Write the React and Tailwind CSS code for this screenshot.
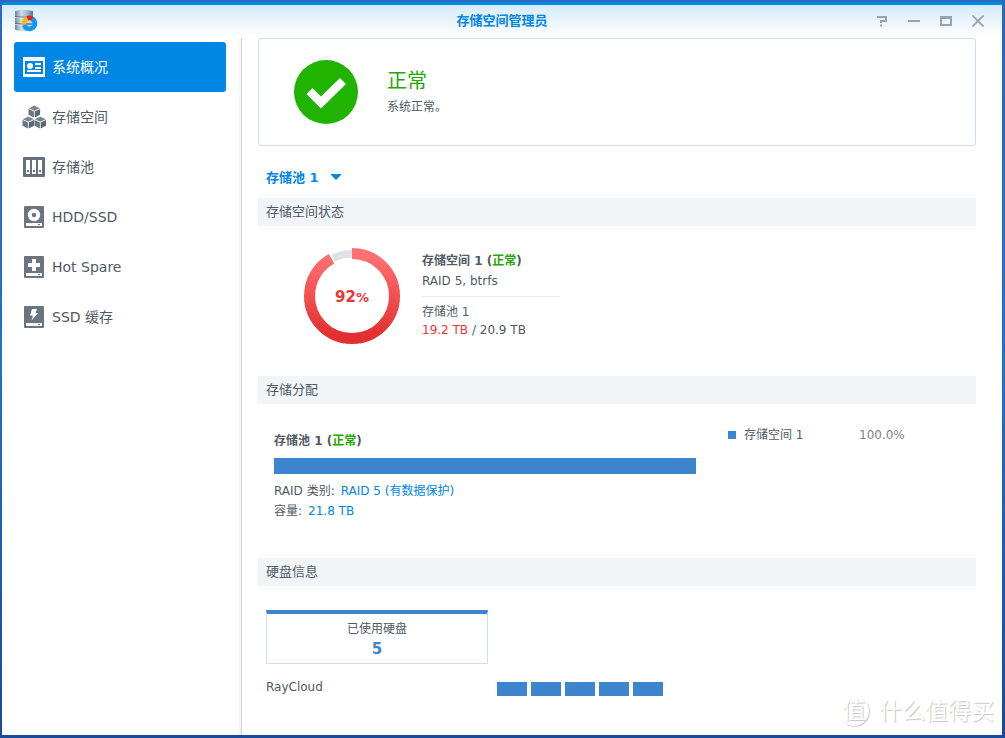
import { useState } from "react";

const menu = [
  { id: "overview", label: "系统概况", Icon: OverviewIcon },
  { id: "volume", label: "存储空间", Icon: VolumeIcon },
  { id: "pool", label: "存储池", Icon: PoolIcon },
  { id: "hdd", label: "HDD/SSD", Icon: HddIcon },
  { id: "spare", label: "Hot Spare", Icon: SpareIcon },
  { id: "cache", label: "SSD 缓存", Icon: CacheIcon },
];

const disks = [1, 2, 3, 4, 5];

function AppIcon() {
  return (
    <svg width="24" height="24" viewBox="0 0 24 24" aria-hidden="true">
      <defs>
        <linearGradient id="cylinder" x1="0" y1="0" x2="1" y2="0">
          <stop offset="0" stopColor="#6b899d" />
          <stop offset="0.35" stopColor="#cfdfe9" />
          <stop offset="0.7" stopColor="#9db4c4" />
          <stop offset="1" stopColor="#58768a" />
        </linearGradient>
      </defs>
      <path d="M1 2Q10 0 19 2V21Q10 23 1 21Z" fill="url(#cylinder)" />
      <path d="M1 7.500Q10 9 19 7.500M1 14.500Q10 16 19 14.500" fill="none" stroke="#587085" strokeWidth="1" />
      <path d="M1 8.500Q10 10 19 8.500M1 15.500Q10 17 19 15.500" fill="none" stroke="#eaf2f7" strokeWidth="0.6" />
      <circle cx="15.500" cy="14.500" r="3" fill="#c3d3de" />
      <path d="M12.500 15H18.500" stroke="#4b6172" strokeWidth="1.200" />
      <g fill="none" strokeWidth="4.500">
        <path d="M18.300 9.700A5.500 5.500 0 1 1 10.200 16" stroke="#0a9bff" />
        <path d="M9.800 15.500A5.500 5.500 0 0 1 13.500 9.500" stroke="#fdb913" />
        <path d="M13.300 9.300A5.500 5.500 0 0 1 18.300 9.600" stroke="#e3202b" />
      </g>
    </svg>
  );
}

function OverviewIcon() {
  return (
    <svg width="24" height="24" viewBox="0 0 24 24" aria-hidden="true">
      <path d="M1 2H23V22H1ZM3 6V19H21V6Z" fill="#fff" fillRule="evenodd" />
      <circle cx="8" cy="11" r="3" fill="#fff" />
      <path d="M13 8H19V10H13ZM13 12H19V14H13ZM5 15H19V17H5Z" fill="#fff" />
    </svg>
  );
}

function Cube({ x, y }) {
  return (
    <g transform={`translate(${x} ${y})`}>
      <path d="M5.800 0L11.300 2.700L5.800 5.300L0.300 2.700Z" fill="#7d868f" />
      <path d="M0 3.400L5.400 6V12L0 9.300Z" fill="#6b7480" />
      <path d="M11.600 3.400L6.200 6V12L11.600 9.300Z" fill="#5d6773" />
    </g>
  );
}

function VolumeIcon() {
  return (
    <svg width="24" height="24" viewBox="0 0 24 24" aria-hidden="true">
      <Cube x={6.5} y={0.5} />
      <Cube x={0.5} y={11.5} />
      <Cube x={12.5} y={11.5} />
    </svg>
  );
}

function PoolIcon() {
  return (
    <svg width="24" height="24" viewBox="0 0 24 24" aria-hidden="true">
      <rect x="1" y="2" width="22" height="20" rx="1" fill="#67717d" />
      <path d="M4 5H8V19H4ZM10 5H14V19H10ZM16 5H20V19H16Z" fill="#fff" />
      <path d="M5 15H7V17H5ZM11 15H13V17H11ZM17 15H19V17H17Z" fill="#67717d" />
    </svg>
  );
}

function DriveIcon({ children }) {
  return (
    <svg width="24" height="24" viewBox="0 0 24 24" aria-hidden="true">
      <rect x="2" y="1" width="20" height="22" rx="1" fill="#6b7580" />
      <path d="M4 18H20V21H4ZM16 19V20H18V19Z" fill="#fff" fillRule="evenodd" />
      {children}
    </svg>
  );
}

function HddIcon() {
  return (
    <DriveIcon>
      <circle cx="12" cy="10" r="4.200" fill="none" stroke="#fff" strokeWidth="4" />
    </DriveIcon>
  );
}

function SpareIcon() {
  return (
    <DriveIcon>
      <path d="M10 4H14V8H18V12H14V16H10V12H6V8H10Z" fill="#fff" />
    </DriveIcon>
  );
}

function CacheIcon() {
  return (
    <DriveIcon>
      <path d="M10 4H15L13.500 8H16L9.500 15.500L11 10.500H8Z" fill="#fff" />
    </DriveIcon>
  );
}

function WindowButton({ label, children }) {
  return (
    <button type="button" aria-label={label} className="flex h-8 w-8 items-center justify-center">
      <svg width="12" height="12" viewBox="0 0 12 12" fill="none" stroke="#98a3ad" strokeWidth="2">
        {children}
      </svg>
    </button>
  );
}

function TitleBar() {
  return (
    <header className="grid h-[33px] grid-cols-[1fr_auto_1fr] items-start bg-linear-to-b from-[#d6eaf9] to-white px-2">
      <div className="pt-1 pl-1">
        <AppIcon />
      </div>
      <h1 className="text-[13px] leading-8 font-bold text-[#0086e5]">存储空间管理员</h1>
      <div className="flex justify-end">
        <WindowButton label="帮助">
          <path d="M1 2H10V6H5V8M4 10.500H6" />
        </WindowButton>
        <WindowButton label="最小化">
          <path d="M0 6H12" />
        </WindowButton>
        <WindowButton label="最大化">
          <path d="M0 2.500H12" strokeWidth="3" />
          <path d="M1 3V10H11V3" />
        </WindowButton>
        <WindowButton label="关闭">
          <path d="M0.500 0.500L11.500 11.500M11.500 0.500L0.500 11.500" strokeWidth="1.800" />
        </WindowButton>
      </div>
    </header>
  );
}

function Sidebar({ active, onSelect }) {
  return (
    <nav className="w-60 shrink-0 border-r border-[#d5d5d5] bg-linear-to-l from-[#f0f0f0] to-white to-[3px] pt-1 pr-[15px] pl-3">
      {menu.map(({ id, label, Icon }) => (
        <button
          key={id}
          type="button"
          onClick={() => onSelect(id)}
          className={`flex h-[50px] w-full items-center gap-1.5 rounded-[3px] px-2 text-[14px] ${
            active === id ? "bg-[#0086e5] text-white" : "text-[#505a64]"
          }`}
        >
          <Icon />
          {label}
        </button>
      ))}
    </nav>
  );
}

function SectionTitle({ children }) {
  return (
    <h2 className="h-7 bg-[#f1f5f8] px-2 text-[13px] leading-7 text-[#505a64]">{children}</h2>
  );
}

function UsageRing({ percent }) {
  return (
    <div className="relative h-24 w-24">
      <svg width="96" height="96" viewBox="0 0 96 96" aria-hidden="true">
        <defs>
          <linearGradient id="usage" gradientUnits="userSpaceOnUse" x1="0" y1="0" x2="0" y2="96">
            <stop offset="0.1" stopColor="#ff7070" />
            <stop offset="0.9" stopColor="#e33030" />
          </linearGradient>
          {/* the ring is turned a quarter, so its gradient is turned back */}
          <linearGradient id="usage-side" href="#usage" gradientTransform="rotate(90 48 48)" />
        </defs>
        <g fill="none" transform="rotate(-90 48 48)">
          <circle cx="48" cy="48" r="42.300" stroke="#dde2e6" strokeWidth="7.400" />
          <circle cx="48" cy="48" r="42.500" stroke="#fff" strokeWidth="11" pathLength="100" strokeDasharray={`${percent + 0.6} 100`} />
          <circle cx="48" cy="48" r="42.500" stroke="url(#usage-side)" strokeWidth="11" pathLength="100" strokeDasharray={`${percent} 100`} />
        </g>
      </svg>
      <div className="absolute inset-0 flex items-center justify-center pt-0.5 text-[15px] font-bold text-[#ee3535]">
        <p>
          {percent}
          <span className="text-[13px]">%</span>
        </p>
      </div>
    </div>
  );
}

function Watermark() {
  return (
    <div className="absolute right-2 bottom-2 flex items-center gap-2.5 text-[23px] leading-8 text-white [text-shadow:1px_1px_1px_#c4c4c4]">
      <span className="h-[30px] w-[30px] rounded-full text-center leading-[28px] shadow-[1px_1px_1px_#ccc]">值</span>
      <span>什么值得买</span>
    </div>
  );
}

export default function App() {
  const [active, setActive] = useState("overview");

  return (
    <div className="flex min-h-screen bg-linear-to-b from-[#2a69bd] via-[#1f72c4] to-[#1a4a9c] pt-0.5 pr-[3px] pb-[3px] pl-0.5 font-['DejaVu_Sans','Noto_Sans_CJK_SC',sans-serif] text-[12px] leading-5 text-[#505a64]">
      <div className="relative flex flex-1 flex-col border-t-[3px] border-[#0086e5] bg-white">
        <TitleBar />
        <div className="flex flex-1">
          <Sidebar active={active} onSelect={setActive} />

          <main className="flex-1 pr-[26px] pl-4">
            {/* Health */}
            <section className="flex h-[108px] items-center gap-[29px] rounded-[3px] border border-[#d2dde6] pl-[35px]">
              <svg width="64" height="64" viewBox="0 0 64 64" aria-hidden="true">
                <circle cx="32" cy="32" r="32" fill="#20b400" />
                <path d="M12.500 34L18.500 28L27 36.500L46 18L52 24L27 48.500Z" fill="#fff" />
              </svg>
              <div className="pb-0.5">
                <h2 className="text-[20px] leading-8 text-[#1fa800]">正常</h2>
                <p>系统正常。</p>
              </div>
            </section>

            {/* Pool picker */}
            <div className="flex h-[52px] items-center px-2 pt-3">
              <div className="relative">
                <select
                  aria-label="存储池"
                  className="w-20 appearance-none text-[13px] leading-5 font-bold text-[#0086e5]"
                >
                  <option>存储池 1</option>
                </select>
                <svg width="10" height="6" viewBox="0 0 10 6" className="pointer-events-none absolute top-1.5 right-[5px]" aria-hidden="true">
                  <path d="M0 0H10V1L5 6L0 1Z" fill="#0086e5" />
                </svg>
              </div>
            </div>

            <SectionTitle>存储空间状态</SectionTitle>
            <div className="flex h-[150px] gap-[22px] pt-[22px] pl-[46px]">
              <UsageRing percent={92} />
              <div className="pt-[3px]">
                <h3 className="font-bold">
                  存储空间 1 (<span className="text-[#1fa800]">正常</span>)
                </h3>
                <p className="w-[138px] border-b border-[#e8ebee] pb-[5px]">RAID 5, btrfs</p>
                <p className="pt-1.5 leading-[18px]">存储池 1</p>
                <p className="leading-[18px]">
                  <span className="text-[#ee3535]">19.2 TB</span> / 20.9 TB
                </p>
              </div>
            </div>

            <SectionTitle>存储分配</SectionTitle>
            <div className="flex h-[154px] gap-8 pl-4">
              <div className="flex-1 pt-[27px]">
                <h3 className="font-bold">
                  存储池 1 (<span className="text-[#1fa800]">正常</span>)
                </h3>
                <div className="my-[7px] h-4 bg-[#3d85cd]" />
                <p className="flex gap-1.5">
                  RAID 类别: <span className="text-[#0086e5]">RAID 5 (有数据保护)</span>
                </p>
                <p className="flex gap-1.5">
                  容量: <span className="text-[#0086e5]">21.8 TB</span>
                </p>
              </div>
              <div className="flex w-[248px] items-start pt-[21px]">
                <p className="flex w-[131px] items-center gap-2">
                  <span className="h-2 w-2 bg-[#3d85cd]" />
                  存储空间 1
                </p>
                <p className="text-[#7b838c]">100.0%</p>
              </div>
            </div>

            <SectionTitle>硬盘信息</SectionTitle>
            <div className="px-2 pt-6">
              <div className="w-[222px] border border-t-4 border-[#d2dde6] border-t-[#3d85cd] pt-[5px] pb-1 text-center">
                <p>已使用硬盘</p>
                <p className="text-[15px] font-bold text-[#3d85cd]">{disks.length}</p>
              </div>
              <div className="flex pt-[13px]">
                <p className="w-[231px]">RayCloud</p>
                <div className="flex gap-1 pt-[5px]">
                  {disks.map((disk) => (
                    <span key={disk} className="h-3.5 w-[30px] bg-[#3d85cd]" />
                  ))}
                </div>
              </div>
            </div>
          </main>
        </div>
        <Watermark />
      </div>
    </div>
  );
}
